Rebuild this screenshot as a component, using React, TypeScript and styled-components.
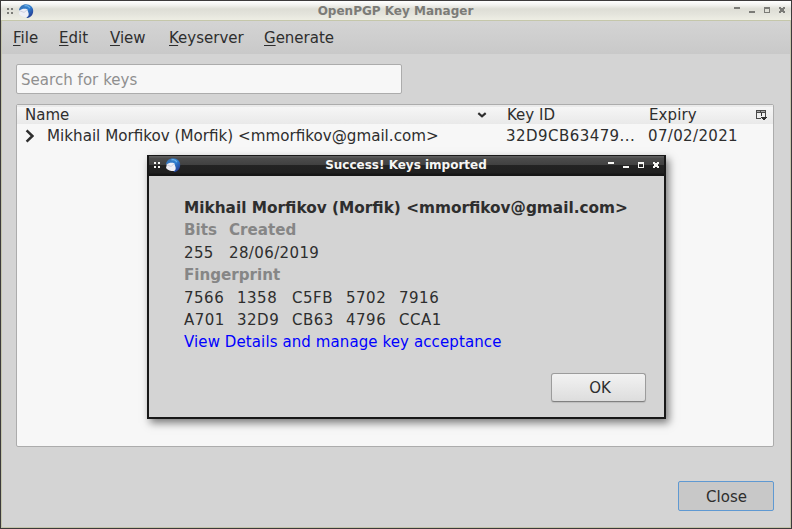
import React from "react";
import styled, { createGlobalStyle } from "styled-components";

const GlobalStyle = createGlobalStyle`
  * { box-sizing: border-box; }
  html, body { margin: 0; padding: 0; }
  body {
    width: 792px;
    height: 529px;
    overflow: hidden;
    font-family: "DejaVu Sans", sans-serif;
    font-size: 15px;
    color: #2e2e2e;
  }
`;

const Window = styled.div`
  position: relative;
  display: flex;
  flex-direction: column;
  width: 792px;
  height: 529px;
  border: 1px solid #3c3a3b;
  background: #d4d4d4;
  box-shadow: inset -1px 0 #c3c4ab, inset 1px 0 #c3c4ab, inset 0 -1px #c3c4ab;
`;

const TitleBar = styled.header<{ $dark?: boolean }>`
  display: grid;
  grid-template-columns: 60px 1fr 60px;
  align-items: center;
  flex: none;
  height: 20px;
  color: ${(p) => (p.$dark ? "#f6f6f4" : "#7b7b77")};
  background: ${(p) =>
    p.$dark
      ? "linear-gradient(#5e5e5e 0 1px, #4c4c4c 2px, #414141 9px, #232323 9px, #202020 17px, #161616 18px)"
      : "linear-gradient(#ffffff 0, #f2f2ef 4px, #deded6 8px, #e4e4dc 13px, #eeeee4 19px)"};
  border-bottom: ${(p) => (p.$dark ? "0" : "1px solid #c5c7aa")};
`;

const TitleText = styled.h1<{ $dark?: boolean }>`
  margin: 0 0 0 -1px;
  padding-bottom: ${(p) => (p.$dark ? "2px" : "0")};
  font-size: 12px;
  line-height: 16px;
  font-weight: bold;
  text-align: center;
  white-space: nowrap;
`;

const TitleLeft = styled.div<{ $dark?: boolean }>`
  display: flex;
  align-items: center;
  gap: 4px;
  padding-left: ${(p) => (p.$dark ? "5px" : "6px")};
  padding-bottom: ${(p) => (p.$dark ? "2px" : "0")};
  svg { display: block; }
`;

const TitleRight = styled.div<{ $dark?: boolean }>`
  display: flex;
  justify-content: flex-end;
  padding-right: ${(p) => (p.$dark ? "4px" : "5px")};
  padding-bottom: ${(p) => (p.$dark ? "1px" : "0")};
  svg { display: block; }
`;

const Dots = () => (
  <svg width="7" height="6" fill="currentColor" shapeRendering="crispEdges">
    <path d="M0 0h2v2H0zM4 0h2v2H4zM0 4h2v2H0zM4 4h2v2H4z" />
  </svg>
);

const Thunderbird = ({ id }: { id: string }) => (
  <svg width="16" height="16" viewBox="0 0 16 16">
    <defs>
      <linearGradient id={id} x1="0" y1="0" x2="1" y2="1">
        <stop offset="0" stopColor="#3a6fae" />
        <stop offset=".5" stopColor="#2f7fd0" />
        <stop offset="1" stopColor="#22267e" />
      </linearGradient>
    </defs>
    <path d="M1 7C1.500 3.500 4.500 1.200 8 1.200c4.400 0 7.200 3 7.200 6.600 0 4-2.400 6.800-6 7.200L5 10z" fill={`url(#${id})`} />
    <path d="M1.800 7.600C3.300 5.800 6.500 5.200 9.200 6.200l1.400 4c.3 1.900-.3 3.200-1.600 3.900-3 .1-6-.8-8-3.200z" fill="#efeff6" />
    <path d="M2.200 8l3.900 1.400 3.200-2.800" stroke="#c3c5d8" strokeWidth=".8" fill="none" />
    <path d="M6.500 2.900c2.200-.6 4.300.2 5.400 2.200" stroke="#6cb2ea" strokeWidth="1.200" fill="none" />
  </svg>
);

const WindowControls = () => (
  <svg width="52" height="7" shapeRendering="crispEdges" fill="currentColor">
    <path d="M0 0h6v2H0z" />
    <path d="M15 4h6v2h-6z" />
    <path fillRule="evenodd" d="M30 0h6v6h-6zM31 2v3h4V2z" />
    <path d="M45 0h2v1h2V0h2v2h-1v2h1v2h-2V5h-2v1h-2V4h1V2h-1z" />
  </svg>
);

const MenuBar = styled.nav`
  display: grid;
  grid-template-columns: 46px 51px 59px 95px 90px;
  flex: none;
  height: 33px;
  margin: 0 1px;
  padding-left: 11px;
  line-height: 34px;
  background: linear-gradient(#d4d4d4, #c9c9c9);
`;

const MenuItem = styled.span`
  white-space: nowrap;
`;

const MnemonicKey = styled.span`
  text-decoration: underline;
  text-decoration-thickness: 1px;
  text-underline-offset: 2px;
`;

const Body = styled.main`
  display: flex;
  flex-direction: column;
  flex: 1;
  padding: 10px 17px 17px 15px;
`;

const SearchInput = styled.input`
  flex: none;
  width: 386px;
  height: 30px;
  padding: 1px 4px 0;
  border: 1px solid #acacac;
  border-radius: 2px;
  outline: none;
  background: #f7f7f7;
  font: inherit;
  letter-spacing: 0.04px;
  &::placeholder { color: #8f8f8f; opacity: 1; }
`;

const KeyTree = styled.section`
  flex: none;
  height: 343px;
  margin-top: 10px;
  border: 1px solid #acacac;
  border-radius: 2px;
  background: #f7f7f7;
`;

const TreeLine = styled.div<{ $header?: boolean }>`
  display: grid;
  grid-template-columns: 482px 142px 103px 1fr;
  align-items: center;
  height: ${(p) => (p.$header ? "19px" : "23px")};
  padding-left: 8px;
  background: ${(p) =>
    p.$header ? "linear-gradient(#eaeaea 0 2px, #f6f6f6 2px, #e9e9e9)" : "none"};
`;

const Cell = styled.div<{ $nudge?: number; $tracking?: number }>`
  display: flex;
  align-items: center;
  white-space: nowrap;
  margin-left: ${(p) => p.$nudge ?? 0}px;
  letter-spacing: ${(p) => p.$tracking ?? 0}px;
`;

const NameHeader = styled(Cell)`
  justify-content: space-between;
  padding-right: 20px;
`;

const ColumnPicker = styled.button`
  display: flex;
  padding: 1px 0 0 4px;
  border: 0;
  background: none;
`;

const RowName = styled.span`
  margin-left: 13px;
  font-size: 15.15px;
`;

const Footer = styled.footer`
  display: flex;
  justify-content: flex-end;
  margin-top: auto;
`;

const Button = styled.button<{ $focused?: boolean }>`
  width: ${(p) => (p.$focused ? "96px" : "95px")};
  height: ${(p) => (p.$focused ? "30px" : "29px")};
  padding: ${(p) => (p.$focused ? "1px 0 0 1px" : "0 0 0 3px")};
  border: 1px solid ${(p) => (p.$focused ? "#5f99d2" : "#9c9c9c")};
  border-bottom-color: ${(p) => (p.$focused ? "#5f99d2" : "#808080")};
  border-radius: ${(p) => (p.$focused ? "2px" : "3px")};
  background: ${(p) => (p.$focused ? "#c8c8c8" : "linear-gradient(#f2f2f2, #dddddd)")};
  box-shadow: ${(p) => (p.$focused ? "none" : "0 1px 1px #bdbdbd")};
  color: inherit;
  font: inherit;
`;

const Dialog = styled.div`
  position: absolute;
  left: 146px;
  top: 154px;
  display: flex;
  flex-direction: column;
  width: 519px;
  height: 264px;
  border: 2px solid #181818;
  border-top-width: 1px;
  background: #d4d4d4;
  box-shadow: 3px 4px 8px rgba(0, 0, 0, 0.5);
`;

const DialogBody = styled.div`
  display: flex;
  flex-direction: column;
  flex: 1;
  padding: 21px 18px 15px 35px;
  line-height: 22px;
`;

const KeyOwner = styled.div`
  font-size: 15.32px;
  font-weight: bold;
  white-space: nowrap;
`;

const FieldRow = styled.div`
  display: grid;
  grid-template-columns: 45px 1fr;
  height: 22px;
`;

const Label = styled.span`
  font-weight: bold;
  font-size: 15.12px;
  color: #868686;
`;

const DateRow = styled(FieldRow)`
  height: 23px;
  line-height: 24px;
  letter-spacing: 0.38px;
`;

const Fingerprint = styled.div`
  display: grid;
  grid-template-columns: 53px 55px 54px 53px 60px;
  padding-top: 1px;
  letter-spacing: 0.5px;
`;

const DetailsLink = styled.a`
  color: #0000ff;
  letter-spacing: 0.1px;
  text-decoration: none;
  white-space: nowrap;
`;

const menus = ["File", "Edit", "View", "Keyserver", "Generate"];
const fingerprint = ["7566", "1358", "C5FB", "5702", "7916", "A701", "32D9", "CB63", "4796", "CCA1"];

export default function App() {
  return (
    <>
      <GlobalStyle />
      <Window>
        <TitleBar>
          <TitleLeft>
            <Dots />
            <Thunderbird id="main-bird" />
          </TitleLeft>
          <TitleText>OpenPGP Key Manager</TitleText>
          <TitleRight>
            <WindowControls />
          </TitleRight>
        </TitleBar>
        <MenuBar>
          {menus.map((m) => (
            <MenuItem key={m}>
              <MnemonicKey>{m[0]}</MnemonicKey>
              {m.slice(1)}
            </MenuItem>
          ))}
        </MenuBar>
        <Body>
          <SearchInput placeholder="Search for keys" />
          <KeyTree>
            <TreeLine $header>
              <NameHeader>
                Name
                <svg width="10" height="6" viewBox="0 0 10 6">
                  <path d="M1.3 1.2L5 4.3l3.7-3.1" fill="none" stroke="#2e2e2e" strokeWidth="2.2" />
                </svg>
              </NameHeader>
              <Cell>Key ID</Cell>
              <Cell $tracking={0.1}>Expiry</Cell>
              <ColumnPicker aria-label="Select columns">
                <svg width="12" height="11" shapeRendering="crispEdges">
                  <path d="M1 1h8v2H1z" fill="#a9a9a9" />
                  <path
                    fillRule="evenodd"
                    fill="#4a4a4a"
                    d="M0 0h10v7H9V3H6v3H5V3H1v5h4v1H0zM1 1v1h3V1zM5 1v1h4V1z"
                  />
                  <path d="M5 3h1v3H5zM5 7h6v1h-1v1H9v1H7V9H6V8H5z" fill="#303030" />
                </svg>
              </ColumnPicker>
            </TreeLine>
            <TreeLine>
              <Cell>
                <svg width="9" height="14" viewBox="0 0 9 14">
                  <path d="M1.600 1.400L7.400 7l-5.800 5.600" fill="none" stroke="#2e2e2e" strokeWidth="2.500" />
                </svg>
                <RowName>Mikhail Morfikov (Morfik) &lt;mmorfikov@gmail.com&gt;</RowName>
              </Cell>
              <Cell $nudge={-1} $tracking={0.45}>32D9CB63479...</Cell>
              <Cell $nudge={-1} $tracking={0.35}>07/02/2021</Cell>
            </TreeLine>
          </KeyTree>
          <Footer>
            <Button $focused>Close</Button>
          </Footer>
        </Body>
        <Dialog role="dialog">
          <TitleBar $dark>
            <TitleLeft $dark>
              <Dots />
              <Thunderbird id="dialog-bird" />
            </TitleLeft>
            <TitleText $dark>Success! Keys imported</TitleText>
            <TitleRight $dark>
              <WindowControls />
            </TitleRight>
          </TitleBar>
          <DialogBody>
            <KeyOwner>Mikhail Morfikov (Morfik) &lt;mmorfikov@gmail.com&gt;</KeyOwner>
            <FieldRow>
              <Label>Bits</Label>
              <Label>Created</Label>
            </FieldRow>
            <DateRow>
              <span>255</span>
              <span>28/06/2019</span>
            </DateRow>
            <Label>Fingerprint</Label>
            <Fingerprint>
              {fingerprint.map((part) => (
                <span key={part}>{part}</span>
              ))}
            </Fingerprint>
            <DetailsLink>View Details and manage key acceptance</DetailsLink>
            <Footer>
              <Button>OK</Button>
            </Footer>
          </DialogBody>
        </Dialog>
      </Window>
    </>
  );
}
